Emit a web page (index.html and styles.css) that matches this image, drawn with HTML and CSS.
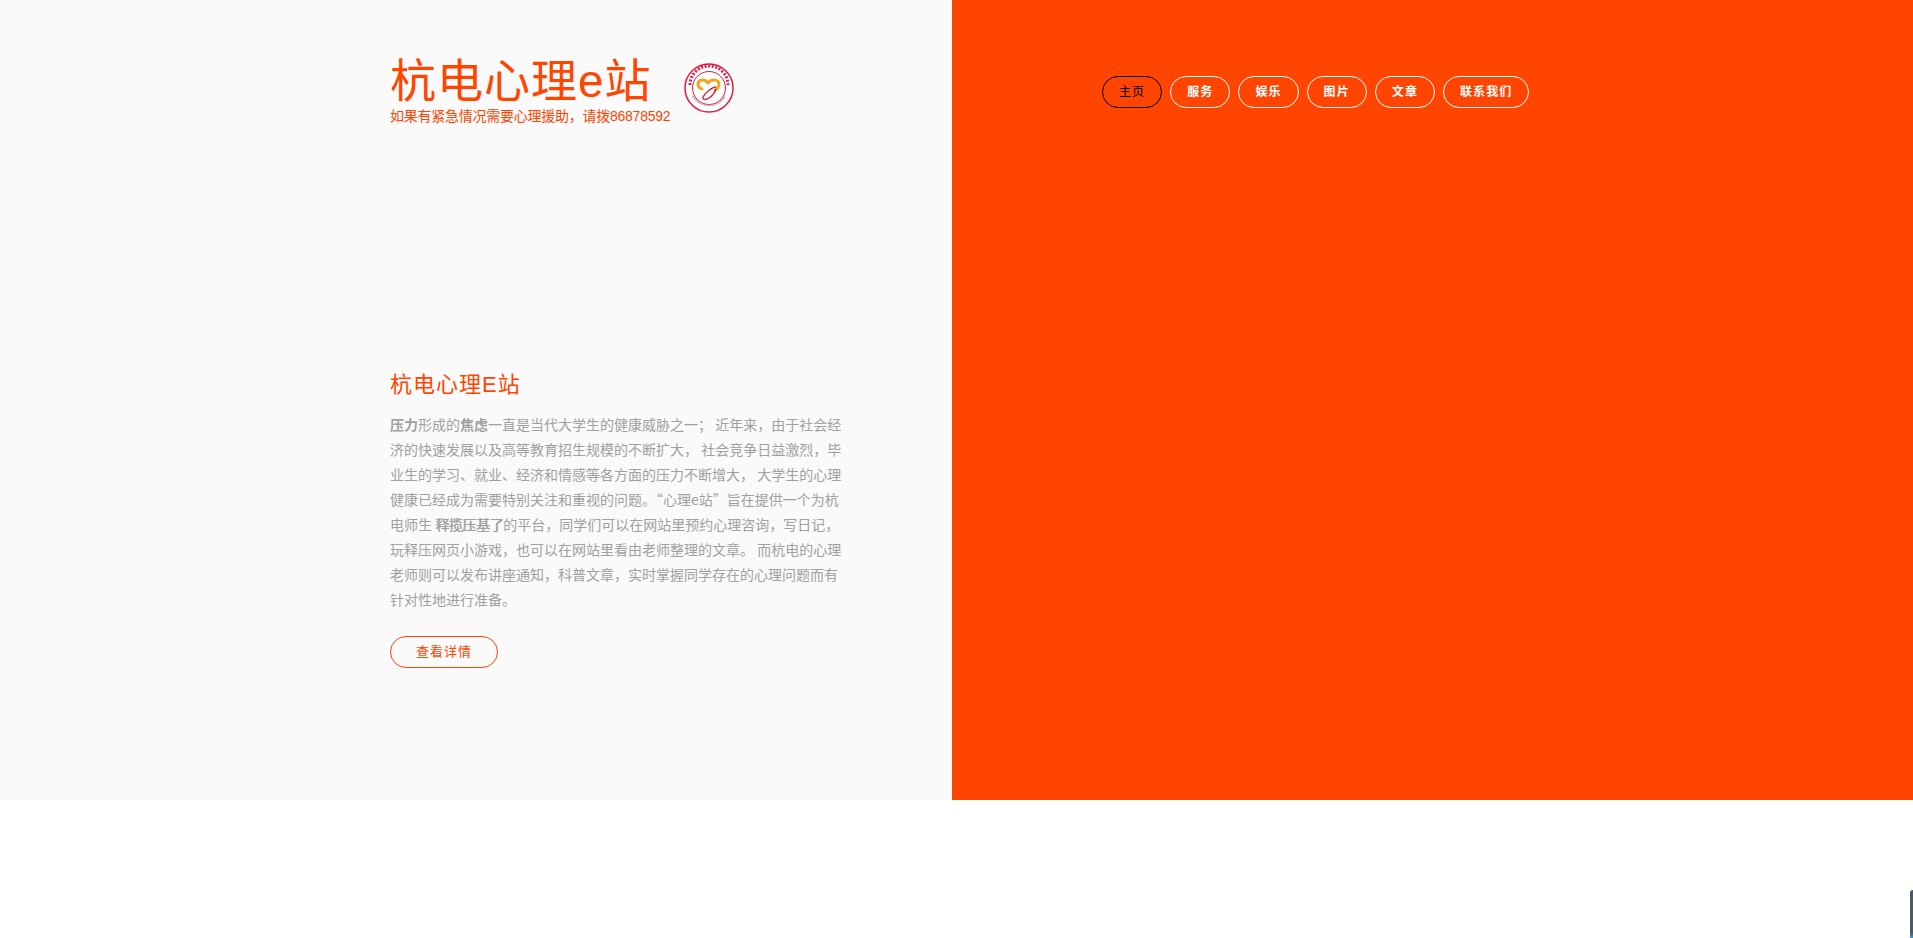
FILE: index.html
```html
<!DOCTYPE html>
<html lang="zh">
<head>
    <meta charset="UTF-8">
    <title>杭电心理e站</title>
    <link rel="stylesheet" href="styles.css">
</head>
<body>
    <section class="hero">
        <div class="left-panel">
            <div class="brand">
                <div class="brand-text">
                    <h1 class="logo">杭电心理e站</h1>
                    <p class="hotline">如果有紧急情况需要心理援助，请拨86878592</p>
                </div>
                <svg class="badge" viewBox="0 0 50 50" role="img" aria-label="心理协会">
                    <circle cx="25" cy="25" r="24" fill="#fff" stroke="#e6173c" stroke-width="1.5"/>
                    <circle cx="25" cy="25" r="16.5" fill="none" stroke="#e6173c" stroke-width="1"/>
                    <path d="M6 22a19 19 0 0 1 38 0" fill="none" stroke="#d8204a" stroke-width="3" stroke-dasharray="2 1.6"/>
                    <path d="M9 33a18.5 18.5 0 0 0 32 0" fill="none" stroke="#c98a9a" stroke-width="2" stroke-dasharray="1.4 1"/>
                    <path d="M24 20c-3-4-10-4-10 1 0 2 1 4 4 5M24 20c3-4 11-4 11 1 0 3-2 5-4 6" fill="none" stroke="#f4a51c" stroke-width="3" stroke-linecap="round"/>
                    <path d="M32 24c-4 0-11 6-13 10-1 3 3 3 6 1 3-2 6-6 7-9" fill="none" stroke="#e6173c" stroke-width="1.4"/>
                </svg>
            </div>
            <div class="intro">
                <h2 class="intro-title">杭电心理E站</h2>
                <p class="intro-text"><b>压力</b>形成的<b>焦虑</b>一直是当代大学生的健康威胁之一； 近年来，由于社会经<br>济的快速发展以及高等教育招生规模的不断扩大， 社会竞争日益激烈，毕<br>业生的学习、就业、经济和情感等各方面的压力不断增大， 大学生的心理<br>健康已经成为需要特别关注和重视的问题。“心理e站”旨在提供一个为杭<br>电师生 <span class="squeezed">释揽压基了</span>的平台，同学们可以在网站里预约心理咨询，写日记，<br>玩释压网页小游戏，也可以在网站里看由老师整理的文章。 而杭电的心理<br>老师则可以发布讲座通知，科普文章，实时掌握同学存在的心理问题而有<br>针对性地进行准备。</p>
                <a class="more-btn" href="#">查看详情</a>
            </div>
        </div>
        <div class="right-panel">
            <nav class="nav">
                <a class="nav-item active" href="#">主页</a>
                <a class="nav-item" href="#">服务</a>
                <a class="nav-item" href="#">娱乐</a>
                <a class="nav-item" href="#">图片</a>
                <a class="nav-item" href="#">文章</a>
                <a class="nav-item" href="#">联系我们</a>
            </nav>
        </div>
    </section>
    <div class="scroll-edge"></div>
</body>
</html>
```

FILE: styles.css
```css
* {
    box-sizing: border-box;
}

html, body {
    margin: 0;
    padding: 0;
    height: 938px;
    overflow: hidden;
    background-color: #fff;
}

body {
    position: relative;
    font-family: "Liberation Sans", "Noto Sans CJK SC", sans-serif;
}

.hero {
    display: flex;
    height: 800px;
}

.left-panel {
    width: 952px;
    background-color: #fafafa;
    padding: 54px 0 0 390px;
}

.right-panel {
    flex: 1;
    background-color: #ff4500;
    padding: 76px 0 0 150px;
}

.brand {
    display: flex;
    align-items: flex-start;
    height: 315px;
}

.logo {
    margin: 0;
    font-family: "Liberation Sans", "Noto Sans CJK JP", serif;
    font-size: 46px;
    font-weight: 400;
    line-height: 54px;
    letter-spacing: 1px;
    color: #ff4500;
}

.hotline {
    margin: 0;
    font-size: 14px;
    line-height: 16px;
    color: #ff4500;
    letter-spacing: -0.25px;
}

.badge {
    width: 50px;
    height: 50px;
    margin: 9px 0 0 14px;
}

.intro {
    width: 470px;
}

.intro-title {
    margin: 0 0 12px;
    font-size: 22px;
    font-weight: 400;
    line-height: 31px;
    letter-spacing: 1px;
    color: #ff4500;
}

.intro-text {
    margin: 0 0 24px;
    font-family: "Noto Sans CJK SC", "Liberation Sans", sans-serif;
    font-size: 14px;
    line-height: 25px;
    color: #a0a0a0;
    white-space: nowrap;
}

.squeezed {
    letter-spacing: -0.4px;
    text-shadow: 0.6px 0 0 #a0a0a0;
}

.more-btn {
    display: block;
    width: 108px;
    height: 32px;
    border: 1px solid #ff4500;
    border-radius: 16px;
    font-size: 13px;
    line-height: 30px;
    letter-spacing: 1px;
    text-align: center;
    text-decoration: none;
    color: #ff4500;
}

.nav {
    display: flex;
    gap: 8px;
}

.nav-item {
    height: 32px;
    padding: 0 16px;
    border: 1px solid #fff;
    border-radius: 16px;
    font-size: 12px;
    font-weight: 700;
    line-height: 30px;
    letter-spacing: 1.1px;
    text-decoration: none;
    color: #fff;
}

.nav-item.active {
    border-color: #000;
    color: #000;
    font-weight: 400;
}

.scroll-edge {
    position: absolute;
    right: 0;
    bottom: 0;
    width: 3px;
    height: 48px;
    border-radius: 3px 0 0 0;
    background: linear-gradient(#4a5a68 90%, #2fa8d8);
}
```
